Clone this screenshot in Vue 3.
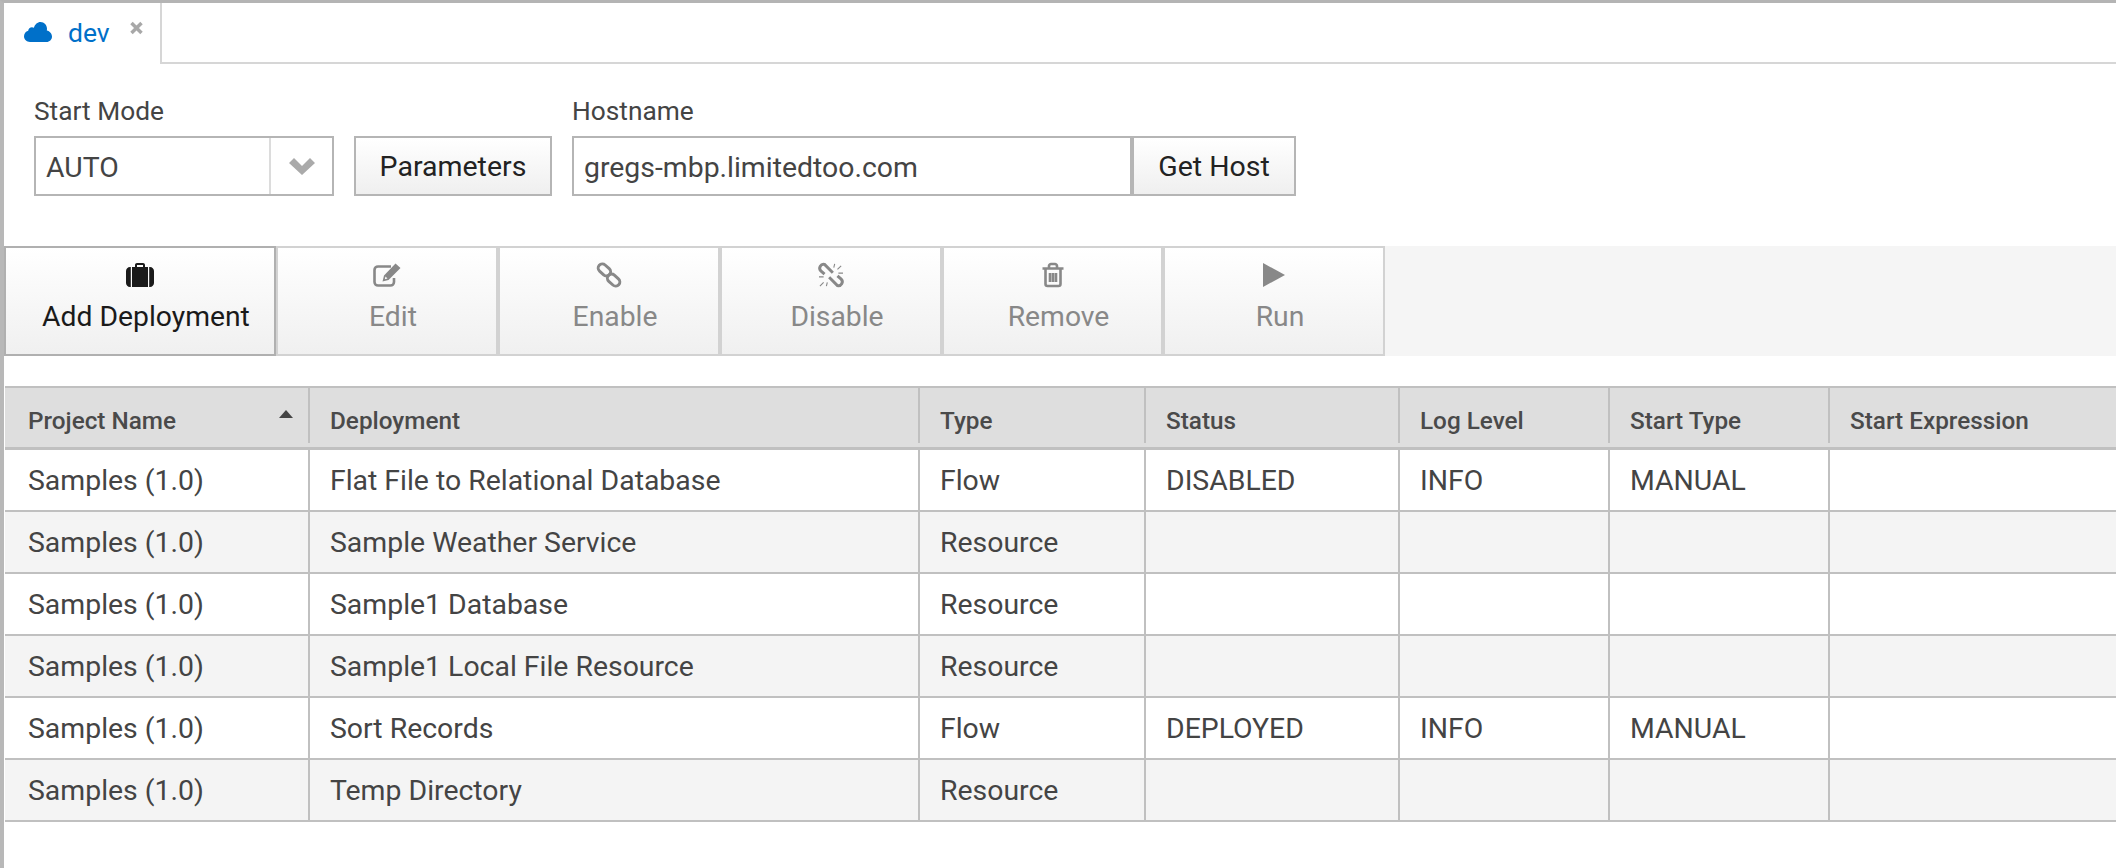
<script setup>
const columns = [
  { label: 'Project Name', sort: true },
  { label: 'Deployment' },
  { label: 'Type' },
  { label: 'Status' },
  { label: 'Log Level' },
  { label: 'Start Type' },
  { label: 'Start Expression' }
]

const rows = [
  ['Samples (1.0)', 'Flat File to Relational Database', 'Flow', 'DISABLED', 'INFO', 'MANUAL', ''],
  ['Samples (1.0)', 'Sample Weather Service', 'Resource', '', '', '', ''],
  ['Samples (1.0)', 'Sample1 Database', 'Resource', '', '', '', ''],
  ['Samples (1.0)', 'Sample1 Local File Resource', 'Resource', '', '', '', ''],
  ['Samples (1.0)', 'Sort Records', 'Flow', 'DEPLOYED', 'INFO', 'MANUAL', ''],
  ['Samples (1.0)', 'Temp Directory', 'Resource', '', '', '', '']
]
</script>

<template>
  <div class="page">
    <div class="tabBar">
      <div class="tab">
        <svg class="cloud" viewBox="0 0 28 20">
          <path d="M6 20C2.700 20 0 17.500 0 14.300 0 11.700 1.700 9.500 4.200 8.800 4.300 6.700 6 5.200 8 5.200 8.700 5.200 9.300 5.400 9.900 5.700 11 2.300 13.500 0 16.500 0 20.200 0 23 3 23 6.800 23 7.400 22.900 8 22.800 8.500 25.800 9.200 28 11.500 28 14.500 28 17.600 25.500 20 22.500 20Z" />
        </svg>
        <span class="tabTitle">dev</span>
        <svg class="closeIcon" viewBox="0 0 15 14">
          <path d="M2.500 2L12.500 12M12.500 2L2.500 12" />
        </svg>
      </div>
    </div>

    <div class="form">
      <div class="field">
        <label>Start Mode</label>
        <div class="control">
          <div class="select">
            <span class="selectValue">AUTO</span>
            <span class="selectArrow">
              <svg viewBox="0 0 26 17"><path d="M0 5L5 0 13 8 21 0 26 5 13 17Z" /></svg>
            </span>
          </div>
          <button class="btn paramBtn">Parameters</button>
        </div>
      </div>
      <div class="field">
        <label>Hostname</label>
        <div class="control joined">
          <div class="input">gregs-mbp.limitedtoo.com</div>
          <button class="btn hostBtn">Get Host</button>
        </div>
      </div>
    </div>

    <div class="toolbar">
      <button class="tool active" style="width: 272px">
        <svg class="toolIcon" viewBox="0 0 28 24">
          <path class="solid" d="M9 4V2C9 .9 9.900 0 11 0H17C18.100 0 19 .9 19 2V4H22V24H6V4ZM11 2V4H17V2ZM4 4H4.800V24H4C1.800 24 0 22.200 0 20V8C0 5.800 1.800 4 4 4ZM23.200 4H24C26.200 4 28 5.800 28 8V20C28 22.200 26.200 24 24 24H23.200Z" />
        </svg>
        <span>Add Deployment</span>
      </button>
      <button class="tool" style="width: 222px">
        <svg class="toolIcon" viewBox="0 0 28 24">
          <path class="line" d="M21 15V19C21 21 19.500 22.500 17.500 22.500H5C3 22.500 1.500 21 1.500 19V7C1.500 5 3 3.500 5 3.500H18" />
          <path class="solid" d="M22.500 .5L27.500 5 15.500 17 9.500 18.500 11 12.500ZM12.500 13.500L11.800 16.200 14.500 15.500Z" />
        </svg>
        <span>Edit</span>
      </button>
      <button class="tool" style="width: 222px">
        <svg class="toolIcon" viewBox="0 0 28 26">
          <g class="line heavy">
            <rect x="1.500" y="3" width="15" height="9" rx="4.500" transform="rotate(42 9 7.500)" />
            <rect x="11.500" y="14" width="15" height="9" rx="4.500" transform="rotate(42 19 18.500)" />
          </g>
        </svg>
        <span>Enable</span>
      </button>
      <button class="tool" style="width: 222px">
        <svg class="toolIcon" viewBox="0 0 28 26">
          <path class="line heavy" d="M7 12L3 8.500C0 5.500 3 .5 7 1.500L16 10.500" />
          <path class="line heavy" d="M21 14L25 17.500C28 20.500 25 25.500 21 24.500L12 15.500" />
          <path class="thin" d="M17 5L18 1M21 7L25 3M22 11H27M6 21L2 25M1 15H6M10 21L9 25" />
        </svg>
        <span>Disable</span>
      </button>
      <button class="tool" style="width: 221px">
        <svg class="toolIcon trash" viewBox="0 0 22 24">
          <path class="line" d="M3.500 6V21C3.500 22 4.300 23 5.500 23H16.500C17.700 23 18.500 22 18.500 21V6M.5 5.500H21.500M7 5V3C7 2 8 1 9 1H13C14 1 15 2 15 3V5" />
          <path class="line" d="M8 10V19M11 10V19M14 10V19" />
        </svg>
        <span>Remove</span>
      </button>
      <button class="tool" style="width: 222px">
        <svg class="toolIcon" viewBox="0 0 22 24">
          <path class="solid" d="M0 0L22 12 0 24Z" />
        </svg>
        <span>Run</span>
      </button>
    </div>

    <div class="grid">
      <div class="gridRow headRow">
        <div v-for="col in columns" :key="col.label" class="headCell">
          <span>{{ col.label }}</span>
          <span v-if="col.sort" class="sortCaret"></span>
        </div>
      </div>
      <div v-for="(row, i) in rows" :key="i" class="gridRow bodyRow">
        <div v-for="(cell, j) in row" :key="j" class="bodyCell">{{ cell }}</div>
      </div>
    </div>
  </div>
</template>

<style>
html,
body {
  margin: 0;
  background: #fff;
  overflow: hidden;
}
</style>

<style scoped>
.page {
  box-sizing: border-box;
  width: 2116px;
  height: 868px;
  overflow: hidden;
  border-top: 3px solid #b4b4b4;
  border-left: 4px solid #b8b8b8;
  background: #fff;
  color: #444;
  font-family: Roboto, "Liberation Sans", sans-serif;
}

/* tab */
.tabBar {
  height: 61px;
  box-sizing: border-box;
  border-bottom: 2px solid #d6d6d6;
}

.tab {
  box-sizing: border-box;
  width: 158px;
  height: 61px;
  padding-left: 20px;
  display: flex;
  align-items: flex-start;
  background: #fff;
  border-right: 2px solid #d6d6d6;
}

.cloud {
  width: 28px;
  height: 20px;
  margin-top: 19px;
  fill: #0070c9;
}

.tabTitle {
  margin-left: 16px;
  margin-top: 14px;
  font-size: 26.500px;
  line-height: 32px;
  color: #0070c9;
}

.closeIcon {
  width: 15px;
  height: 14px;
  margin-left: 19px;
  margin-top: 18px;
  fill: none;
  stroke: #a8a8a8;
  stroke-width: 3.500;
}

/* form */
.form {
  display: flex;
  gap: 20px;
  padding: 31px 0 0 30px;
}

.field label {
  display: block;
  font-size: 26.300px;
  line-height: 32px;
  margin-bottom: 9px;
  color: #444;
}

.control {
  display: flex;
  gap: 20px;
  height: 60px;
}

.control.joined {
  gap: 0;
}

.select {
  box-sizing: border-box;
  width: 300px;
  display: flex;
  border: 2px solid #b5b5b5;
  background: #fff;
}

.selectValue {
  flex: 1;
  padding-left: 10px;
  font-size: 28.400px;
  line-height: 60px;
}

.selectArrow {
  width: 61px;
  display: flex;
  align-items: center;
  justify-content: center;
  border-left: 2px solid #dcdcdc;
}

.selectArrow svg {
  width: 26px;
  height: 17px;
  fill: #aaa;
}

.btn {
  box-sizing: border-box;
  height: 60px;
  padding: 0;
  border: 2px solid #b5b5b5;
  background: linear-gradient(#fff, #efefef);
  color: #222;
  font-family: inherit;
  font-size: 28.500px;
}

.paramBtn {
  width: 198px;
}

.input {
  box-sizing: border-box;
  width: 560px;
  padding-left: 10px;
  border: 2px solid #b5b5b5;
  font-size: 28.400px;
  line-height: 60px;
}

.hostBtn {
  width: 164px;
}

/* toolbar */
.toolbar {
  display: flex;
  height: 110px;
  margin-top: 50px;
  background: #f5f5f5;
}

.tool {
  box-sizing: border-box;
  height: 110px;
  padding: 15px 0 0;
  display: flex;
  flex-direction: column;
  align-items: center;
  border: 2px solid #d2d2d2;
  background: linear-gradient(#fff, #f0f0f0);
  color: #888;
  fill: #888;
  stroke: #888;
  font-family: inherit;
  font-size: 28.300px;
}

.tool.active {
  border-color: #b0b0b0;
  color: #1a1a1a;
  fill: #1a1a1a;
  stroke: #1a1a1a;
}

.tool span {
  margin-top: 10px;
  margin-left: 12px;
  line-height: 40px;
}

.toolIcon {
  display: block;
  width: 28px;
  height: 24px;
  overflow: visible;
}

.toolIcon.trash {
  width: 22px;
}

.solid {
  stroke: none;
}

.line,
.line * {
  fill: none;
  stroke-width: 2.600;
}

.line.heavy,
.line.heavy * {
  stroke-width: 3.200;
}

.thin {
  fill: none;
  stroke-width: 1.200;
}

/* table */
.grid {
  margin: 30px 0 0 1px;
  border-top: 2px solid #c0c0c0;
  font-size: 28.400px;
  width: 2112px;
}

.gridRow {
  display: grid;
  grid-template-columns: 305px 610px 226px 254px 210px 220px 287px;
  height: 62px;
  box-sizing: border-box;
  border-bottom: 2px solid #c0c0c0;
}

.headRow {
  height: 62px;
  border-bottom-width: 3px;
  background: #dedede;
}

.headCell {
  box-sizing: border-box;
  height: 55px;
  padding: 9px 15px 0 20px;
  display: flex;
  align-items: center;
  justify-content: space-between;
  border-right: 2px solid #c0c0c0;
  font-size: 24.300px;
  font-weight: 500;
  color: #4a4a4a;
}

.headCell:first-child,
.bodyCell:first-child {
  padding-left: 23px;
}

.headCell:last-child,
.bodyCell:last-child {
  border-right: none;
}

.sortCaret {
  width: 0;
  height: 0;
  margin-bottom: 12px;
  border-left: 7px solid transparent;
  border-right: 7px solid transparent;
  border-bottom: 8px solid #444;
}

.bodyRow:nth-child(odd) {
  background: #f4f4f4;
}

.bodyCell {
  box-sizing: border-box;
  padding-left: 20px;
  border-right: 2px solid #c0c0c0;
  line-height: 62px;
  white-space: nowrap;
  overflow: hidden;
}
</style>
